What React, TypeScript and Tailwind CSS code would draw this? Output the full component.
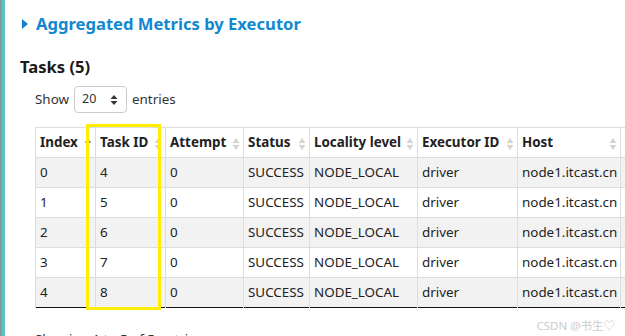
import React from "react";

const rows = [
  { index: 0, taskId: 4 },
  { index: 1, taskId: 5 },
  { index: 2, taskId: 6 },
  { index: 3, taskId: 7 },
  { index: 4, taskId: 8 },
];

const columns = [
  { label: "Index", width: 60, active: true },
  { label: "Task ID", width: 70 },
  { label: "Attempt", width: 78 },
  { label: "Status", width: 66 },
  { label: "Locality level", width: 108 },
  { label: "Executor ID", width: 100 },
  { label: "Host", width: 103 },
  { label: "Logs", width: 100 },
];

function SortIcon({ active }: { active?: boolean }) {
  return (
    <svg width="8" height="14" viewBox="0 0 8 14" className="absolute right-[3px] top-[9px]">
      <path d="M4 1 L7.5 6 L0.5 6 Z" fill={active ? "#8f8fdc" : "#d4d4d4"} />
      {!active && <path d="M4 13 L7.5 8 L0.5 8 Z" fill="#d4d4d4" />}
    </svg>
  );
}

export default function App() {
  return (
    <div className="relative flex h-[336px] w-[625px] overflow-hidden bg-white text-[#222] font-['Segoe_UI','Noto_Sans',sans-serif]">
      <div className="w-[2px] shrink-0 bg-[#7e9e9d]" />
      <div className="w-[3px] shrink-0 bg-[#5cc3c0]" />
      <div className="flex-1 pl-[15px] pt-[11px]">
        <div className="flex items-center gap-[8px] pl-[2px]">
          <svg width="6" height="10" viewBox="0 0 6 10">
            <path d="M0 0 L6 5 L0 10 Z" fill="#1485cf" />
          </svg>
          <h4 className="text-[16.6px] font-bold leading-[26px] text-[#1188d0]">Aggregated Metrics by Executor</h4>
        </div>
        <h4 className="mt-[18px] text-[16.6px] font-bold leading-[24px] text-[#1a1a1a]">Tasks (5)</h4>
        <div className="mt-[7px] flex items-center pl-[15px] text-[13.4px] text-[#333]">
          <span>Show</span>
          <div className="ml-[5px] flex h-[27px] w-[53px] items-center justify-between rounded-[4px] border border-[#ccc] pl-[7px] pr-[8px] text-[12.5px]">
            <span>20</span>
            <svg width="8" height="12" viewBox="0 0 8 12">
              <path d="M4 1 L7.5 5 L0.5 5 Z" fill="#333" />
              <path d="M4 11 L7.5 7 L0.5 7 Z" fill="#333" />
            </svg>
          </div>
          <span className="ml-[5px]">entries</span>
        </div>
        <div className="relative ml-[15px] mt-[14px]">
          <table className="table-fixed border-collapse text-[13.4px]" style={{ width: 685 }}>
            <colgroup>
              {columns.map((c) => (
                <col key={c.label} style={{ width: c.width }} />
              ))}
            </colgroup>
            <thead>
              <tr className="h-[30px]">
                {columns.map((c) => (
                  <th
                    key={c.label}
                    className="relative border border-[#ddd] pl-[4px] text-left font-bold text-[#222] whitespace-nowrap"
                  >
                    {c.label}
                    <SortIcon active={c.active} />
                  </th>
                ))}
              </tr>
            </thead>
            <tbody>
              {rows.map((r, i) => (
                <tr
                  key={r.index}
                  className={`h-[30px] ${i % 2 === 0 ? "bg-[#f2f2f2]" : "bg-white"} ${
                    i === rows.length - 1 ? "border-b border-b-[#111]" : ""
                  }`}
                >
                  <td className="border-x border-t border-[#ddd] pl-[4px]">{r.index}</td>
                  <td className="border-x border-t border-[#ddd] pl-[4px]">{r.taskId}</td>
                  <td className="border-x border-t border-[#ddd] pl-[4px]">0</td>
                  <td className="border-x border-t border-[#ddd] pl-[4px]">SUCCESS</td>
                  <td className="border-x border-t border-[#ddd] pl-[4px]">NODE_LOCAL</td>
                  <td className="border-x border-t border-[#ddd] pl-[4px]">driver</td>
                  <td className="border-x border-t border-[#ddd] pl-[4px]">node1.itcast.cn</td>
                  <td className="border-x border-t border-[#ddd] pl-[4px]"></td>
                </tr>
              ))}
            </tbody>
          </table>
          <div className="pointer-events-none absolute left-[51px] top-[-3px] h-[186px] w-[75px] border-[3px] border-[#ffee00]" />
          <div className="mt-[21px] text-[13.4px] text-[#333]">Showing 1 to 5 of 5 entries</div>
        </div>
      </div>
      <div className="pointer-events-none absolute right-[10px] top-[317px] text-[11.5px] text-[#cccccc] font-['Noto_Sans','Noto_Sans_CJK_SC',sans-serif]">
        CSDN @书生♡
      </div>
    </div>
  );
}
